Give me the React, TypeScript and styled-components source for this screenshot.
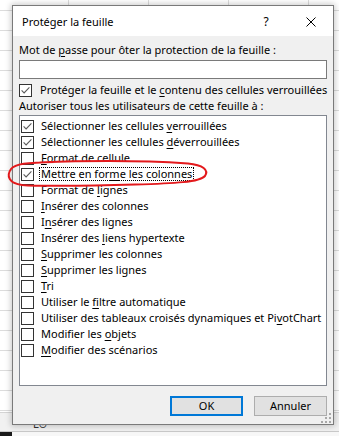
import React from "react";
import styled, { createGlobalStyle } from "styled-components";

const GlobalStyle = createGlobalStyle`
  html, body { margin: 0; padding: 0; }
  body {
    font-family: "Noto Sans", "DejaVu Sans", sans-serif;
    font-size: 11px;
    color: #000;
    background: #ffffff;
    overflow: hidden;
  }
  * { box-sizing: border-box; }
`;

const Page = styled.div`
  position: relative;
  width: 339px;
  height: 436px;
  display: flex;
  flex-direction: column;
  overflow: hidden;
`;

const SheetGrid = styled.div`
  flex: 1;
  background-color: #ffffff;
  background-image:
    repeating-linear-gradient(to bottom, transparent 0 10px, #dcdcdc 10px 11px, transparent 11px 20px),
    repeating-linear-gradient(to right, transparent 0 68px, #dcdcdc 68px 69px, transparent 69px 80px);
`;

const StatusBar = styled.div`
  height: 24px;
  display: flex;
  flex-direction: column;
  background: #f1f1f1;
  border-top: 1px solid #d4d4d4;
`;

const StatusTop = styled.div`
  flex: 1;
  padding: 7px 0 0 33px;
  font-family: "DejaVu Sans", sans-serif;
  font-size: 10px;
  line-height: 10px;
  color: #333;
`;

const StatusBottom = styled.div`
  height: 5px;
  display: flex;
  border-top: 1px solid #c9c9c9;
  background: #f7f7f7;
`;

const BlackTab = styled.div`
  width: 12px;
  background: #1a1a1a;
`;

const Dialog = styled.div`
  position: absolute;
  left: 12px;
  top: 5px;
  width: 322px;
  height: 420px;
  border: 1px solid #7a7a7a;
  background: #f0f0f0;
  box-shadow: 0 0 6px 1px rgba(0, 0, 0, 0.22);
  display: flex;
  flex-direction: column;
`;

const TitleBar = styled.div`
  height: 30px;
  background: #ffffff;
  display: flex;
  align-items: center;
  padding: 0 2px 0 9px;
  gap: 5px;
`;

const TitleText = styled.div`
  flex: 1;
  font-size: 11px;
  line-height: 16px;
  padding-top: 1px;
`;

const TitleControl = styled.div`
  width: 40px;
  height: 28px;
  display: flex;
  align-items: center;
  justify-content: center;
  font-size: 12px;
  padding-top: 1px;
`;

const Body = styled.div`
  flex: 1;
  display: flex;
  flex-direction: column;
  padding: 6px 6px 0;
`;

const FieldLabel = styled.div<{ $gapAfter?: number }>`
  line-height: 16px;
  height: 16px;
  white-space: nowrap;
  margin-bottom: ${(p) => p.$gapAfter ?? 0}px;
`;

const PasswordInput = styled.div`
  height: 19px;
  background: #ffffff;
  border: 1px solid #7a7a7a;
`;

const TopCheckRow = styled.div`
  margin-top: 3px;
  height: 16px;
  display: flex;
  align-items: center;
  white-space: nowrap;
`;

const TopCheckText = styled.span`
  margin-left: 8px;
  line-height: 16px;
`;

const Key = styled.span`
  text-decoration: underline;
  text-decoration-thickness: 1px;
  text-underline-offset: 2px;
`;

const Box = styled.span`
  flex: 0 0 13px;
  width: 13px;
  height: 13px;
  border: 1px solid #333333;
  background: #ffffff;
  display: flex;
`;

const ListBox = styled.div`
  height: 271px;
  background: #ffffff;
  border: 1px solid #828790;
  padding: 2px 0 0 1px;
  display: flex;
  flex-direction: column;
`;

const ListRow = styled.div`
  height: 16px;
  display: flex;
  align-items: center;
  white-space: nowrap;
`;

const ItemLabel = styled.span<{ $focused?: boolean }>`
  margin-left: 5px;
  padding: 0 1px;
  line-height: 12px;
  border: 1px dotted ${(p) => (p.$focused ? "#000" : "transparent")};
`;

const ButtonRow = styled.div`
  margin-top: 10px;
  display: flex;
  justify-content: flex-end;
  gap: 11px;
`;

const Button = styled.div<{ $default?: boolean }>`
  width: 73px;
  height: 20px;
  display: flex;
  align-items: center;
  justify-content: center;
  background: #e1e1e1;
  border: ${(p) => (p.$default ? "2px solid #0078d7" : "1px solid #adadad")};
  line-height: 16px;
`;

const Grip = styled.svg`
  position: absolute;
  right: 2px;
  bottom: 1px;
`;

const Annotation = styled.svg`
  position: absolute;
  left: 0;
  top: 0;
  pointer-events: none;
`;

function CheckBox({ checked }: { checked?: boolean }) {
  return (
    <Box>
      {checked && (
        <svg width="11" height="11" viewBox="0 0 11 11">
          <path d="M1.6 5.4 L4.1 7.9 L9.4 2.4" fill="none" stroke="#5a5a5a" strokeWidth="1.1" />
        </svg>
      )}
    </Box>
  );
}

type Item = { pre: string; key: string; post: string; checked?: boolean; focused?: boolean };

const items: Item[] = [
  { pre: "Sélectionner les cellules ", key: "v", post: "errouillées", checked: true },
  { pre: "Sélectionner les cellules ", key: "d", post: "éverrouillées", checked: true },
  { pre: "", key: "F", post: "ormat de cellule" },
  { pre: "Mettre en for", key: "m", post: "e les colonnes", checked: true, focused: true },
  { pre: "Format de ", key: "l", post: "ignes" },
  { pre: "", key: "I", post: "nsérer des colonnes" },
  { pre: "I", key: "n", post: "sérer des lignes" },
  { pre: "Insérer des ", key: "l", post: "iens hypertexte" },
  { pre: "", key: "S", post: "upprimer les colonnes" },
  { pre: "", key: "S", post: "upprimer les lignes" },
  { pre: "", key: "T", post: "ri" },
  { pre: "Utiliser le ", key: "f", post: "iltre automatique" },
  { pre: "Utiliser des tableaux croisés dynamiques et Pi", key: "v", post: "otChart" },
  { pre: "Modifier les ", key: "o", post: "bjets" },
  { pre: "", key: "M", post: "odifier des scénarios" },
];

export default function App() {
  return (
    <>
      <GlobalStyle />
      <Page>
        <SheetGrid />
        <StatusBar>
          <StatusTop>L⊙</StatusTop>
          <StatusBottom>
            <BlackTab />
          </StatusBottom>
        </StatusBar>

        <Dialog>
          <TitleBar>
            <TitleText>Protéger la feuille</TitleText>
            <TitleControl>?</TitleControl>
            <TitleControl>
              <svg width="10" height="10" viewBox="0 0 10 10">
                <path d="M0.5 0.5 L9.5 9.5 M9.5 0.5 L0.5 9.5" stroke="#000" strokeWidth="1" />
              </svg>
            </TitleControl>
          </TitleBar>

          <Body>
            <FieldLabel>
              Mot de <Key>p</Key>asse pour ôter la protection de la feuille :
            </FieldLabel>
            <PasswordInput style={{ marginTop: 2 }} />
            <TopCheckRow>
              <CheckBox checked />
              <TopCheckText>
                Protéger la feuille et le <Key>c</Key>ontenu des cellules verrouillées
              </TopCheckText>
            </TopCheckRow>
            <FieldLabel $gapAfter={1}>
              Autoriser tous les utilisateurs de cette feuille à :
            </FieldLabel>
            <ListBox>
              {items.map((it, i) => (
                <ListRow key={i}>
                  <CheckBox checked={it.checked} />
                  <ItemLabel $focused={it.focused}>
                    {it.pre}
                    <Key>{it.key}</Key>
                    {it.post}
                  </ItemLabel>
                </ListRow>
              ))}
            </ListBox>
            <ButtonRow>
              <Button $default>OK</Button>
              <Button>Annuler</Button>
            </ButtonRow>
          </Body>

          <Grip width="10" height="10" viewBox="0 0 10 10">
            <rect x="8" y="0" width="2" height="2" fill="#a8a8a8" />
            <rect x="4" y="4" width="2" height="2" fill="#a8a8a8" />
            <rect x="8" y="4" width="2" height="2" fill="#a8a8a8" />
            <rect x="0" y="8" width="2" height="2" fill="#a8a8a8" />
            <rect x="4" y="8" width="2" height="2" fill="#a8a8a8" />
            <rect x="8" y="8" width="2" height="2" fill="#a8a8a8" />
          </Grip>
        </Dialog>

        <Annotation width="339" height="436" viewBox="0 0 339 436">
          <path
            d="M 40 162.5 C 90 160.5, 150 161, 188 163.5 C 203 165, 209 170, 205 176 C 200 182, 175 183.5, 135 184.5 C 95 185.5, 45 187, 22 185 C 9 183.5, 6 176, 11 169 C 15 164, 26 162.5, 55 162"
            fill="none"
            stroke="#e3191c"
            strokeWidth="2"
            strokeLinecap="round"
          />
        </Annotation>
      </Page>
    </>
  );
}
